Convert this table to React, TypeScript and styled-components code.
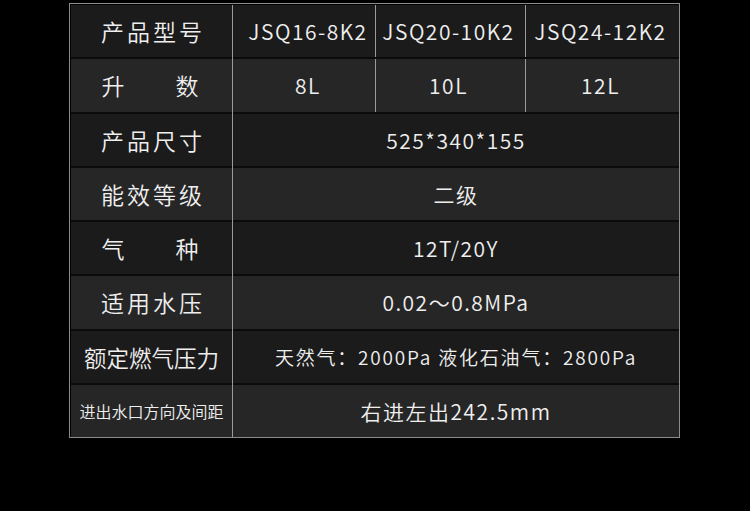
import styled, { createGlobalStyle } from 'styled-components'

const GlobalStyle = createGlobalStyle`
  html, body {
    margin: 0;
    padding: 0;
    background: #000;
  }
  body {
    font-family: "Noto Sans CJK SC", "Noto Sans", sans-serif;
  }
`

// nudge: the text in each model column sits a little off-centre
const models = [
    { name: 'JSQ16-8K2', volume: '8L', nudge: 4 },
    { name: 'JSQ20-10K2', volume: '10L', nudge: -2 },
    { name: 'JSQ24-12K2', volume: '12L', nudge: -2 },
]

const App = () => {
    return (
        <Page>
            <GlobalStyle />
            <Table>
                <Row $alt={false}>
                    <Label>产品型号</Label>
                    {models.map(m => <Cell key={m.name} $nudge={m.nudge}>{m.name}</Cell>)}
                </Row>
                <Row $alt>
                    <Label><Spread><span>升</span><span>数</span></Spread></Label>
                    {models.map(m => <Cell key={m.volume} $nudge={m.nudge}>{m.volume}</Cell>)}
                </Row>
                <Row $alt={false}>
                    <Label>产品尺寸</Label>
                    <Cell $span>525*340*155</Cell>
                </Row>
                <Row $alt>
                    <Label>能效等级</Label>
                    <Cell $span>二级</Cell>
                </Row>
                <Row $alt={false}>
                    <Label><Spread><span>气</span><span>种</span></Spread></Label>
                    <Cell $span>12T/20Y</Cell>
                </Row>
                <Row $alt>
                    <Label>适用水压</Label>
                    <Cell $span>0.02～0.8MPa</Cell>
                </Row>
                <Row $alt={false}>
                    <Label $size="wide">额定燃气压力</Label>
                    <Cell $span $small>天然气：2000Pa 液化石油气：2800Pa</Cell>
                </Row>
                <Row $alt>
                    <Label $size="small">进出水口方向及间距</Label>
                    <Cell $span>右进左出242.5mm</Cell>
                </Row>
            </Table>
        </Page>
    )
}

const Page = styled.div`
  width: 750px;
  height: 511px;
  background: #000;
  padding: 3px 0 0 69px;
  box-sizing: border-box;
`

const Table = styled.div`
  width: 611px;
  height: 435px;
  box-sizing: border-box;
  border: 1px solid #8c8c8c;
  padding: 1px 0 0 1px;
  display: grid;
  grid-template-rows: repeat(8, 1fr);
  row-gap: 2px;
  background:
    linear-gradient(to right, #0b0b0b 161px, #9a9a9a 161px, #9a9a9a 162px, #0b0b0b 162px);
  background-origin: content-box;
  background-clip: content-box;
  background-repeat: no-repeat;
`

const Row = styled.div<{ $alt: boolean }>`
  display: grid;
  grid-template-columns: 161px 143px 150px 1fr;
  background: ${p => (p.$alt ? '#262626' : '#1b1b1b')};
  color: #efefef;
  font-weight: 350;
`

const Label = styled.div<{ $size?: 'wide' | 'small' }>`
  display: flex;
  align-items: center;
  justify-content: center;
  font-size: ${p => (p.$size === 'wide' ? '22.5px' : p.$size === 'small' ? '16px' : '23px')};
  letter-spacing: ${p => (p.$size ? '0' : '3px')};
  padding-left: ${p => (p.$size ? '0' : '3px')};
  white-space: nowrap;
`

const Spread = styled.div`
  width: 100px;
  display: flex;
  justify-content: space-between;
  margin-left: -3px;
`

const Cell = styled.div<{ $span?: boolean; $small?: boolean; $nudge?: number }>`
  grid-column: ${p => (p.$span ? '2 / 5' : 'auto')};
  border-left: 1px solid #9a9a9a;
  display: flex;
  align-items: center;
  justify-content: center;
  font-size: ${p => (p.$small ? '19px' : '21px')};
  letter-spacing: ${p => (p.$small ? '1.8px' : '1.5px')};
  padding-left: ${p => Math.max(0, 2 * (p.$nudge ?? 0))}px;
  padding-right: ${p => Math.max(0, -2 * (p.$nudge ?? 0))}px;
  white-space: nowrap;
`

export default App
